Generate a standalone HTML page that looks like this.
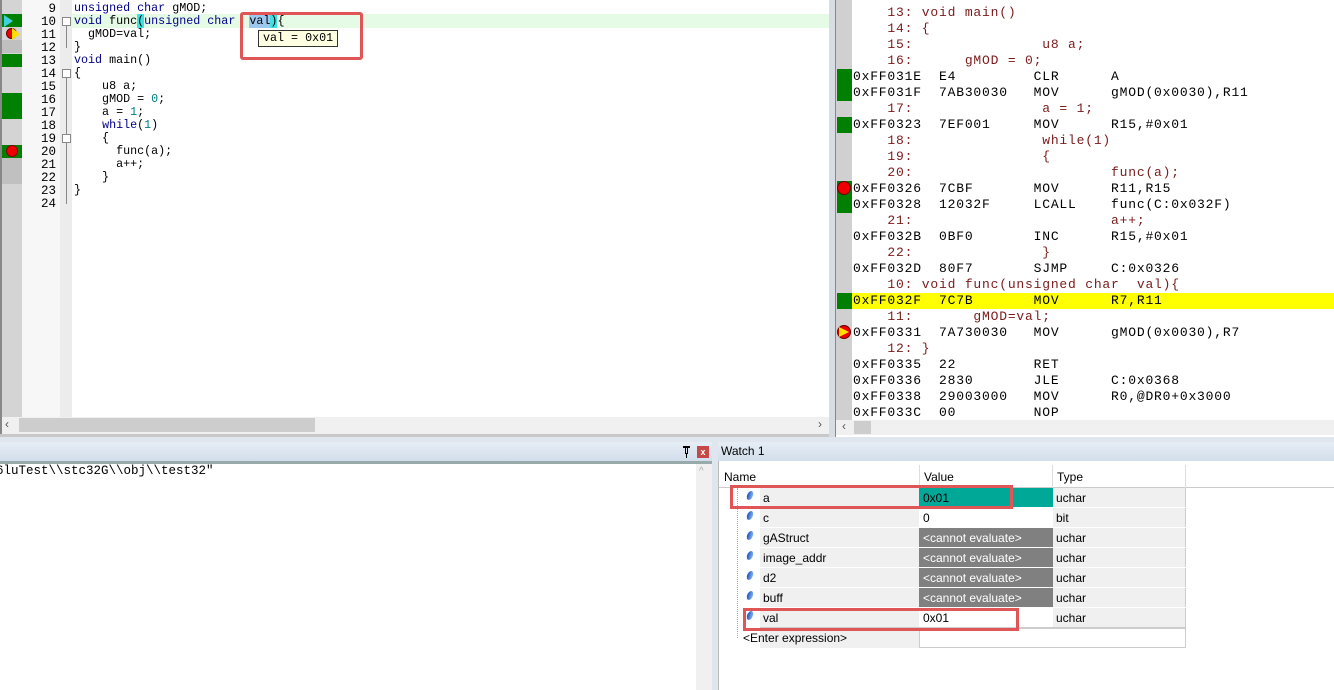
<!DOCTYPE html>
<html><head><meta charset="utf-8"><style>
*{margin:0;padding:0;box-sizing:border-box}
body{width:1334px;height:690px;overflow:hidden;background:#fff;position:relative;font-family:"Liberation Mono",monospace}
.a{position:absolute;white-space:pre}
.src{font-size:11.7px;line-height:13px;color:#000}
.kw{color:#00008b}
.num{color:#008080}
.ln{position:absolute;left:22px;width:34px;text-align:right;font-size:12.5px;color:#000}
.dis{font-size:13px;line-height:16px;letter-spacing:0.8px}
.s{color:#7a1a1a}
.w{font-family:"Liberation Sans",sans-serif;font-size:12px}
</style></head><body>
<div class="a" style="left:0;top:0;width:2px;height:437px;background:#888"></div>
<div class="a" style="left:2px;top:0;width:20px;height:417px;background:#d4d4d4"></div>
<div class="a" style="left:22px;top:0;width:38px;height:417px;background:#f7f7f7"></div>
<div class="a" style="left:60px;top:0;width:12px;height:417px;background:#ececec"></div>
<div class="a" style="left:72px;top:14px;width:757px;height:14px;background:#e6fbe6"></div>
<div class="a" style="left:2px;top:14px;width:20px;height:13px;background:#008000"></div>
<div class="a" style="left:4px;top:15px;width:0;height:0;border-left:9px solid #40d0e0;border-top:6px solid transparent;border-bottom:6px solid transparent"></div>
<div class="a" style="left:6px;top:28px;width:11px;height:11px;border-radius:50%;background:#e00;border:1px solid #600"></div>
<div class="a" style="left:12px;top:28px;width:0;height:0;border-left:8px solid #ffe000;border-top:6px solid transparent;border-bottom:6px solid transparent"></div>
<div class="a" style="left:2px;top:40px;width:20px;height:13px;background:#c0c0c0"></div>
<div class="a" style="left:2px;top:54px;width:20px;height:13px;background:#008000"></div>
<div class="a" style="left:2px;top:93px;width:20px;height:26px;background:#008000"></div>
<div class="a" style="left:2px;top:145px;width:20px;height:13px;background:#008000"></div>
<div class="a" style="left:6px;top:145px;width:12px;height:12px;border-radius:50%;background:#e00;border:1px solid #800"></div>
<div class="a" style="left:2px;top:158px;width:20px;height:26px;background:#c0c0c0"></div>
<div class="ln" style="top:2px">9</div><div class="ln" style="top:15px">10</div><div class="ln" style="top:28px">11</div><div class="ln" style="top:41px">12</div><div class="ln" style="top:54px">13</div><div class="ln" style="top:67px">14</div><div class="ln" style="top:80px">15</div><div class="ln" style="top:93px">16</div><div class="ln" style="top:106px">17</div><div class="ln" style="top:119px">18</div><div class="ln" style="top:132px">19</div><div class="ln" style="top:145px">20</div><div class="ln" style="top:158px">21</div><div class="ln" style="top:171px">22</div><div class="ln" style="top:184px">23</div><div class="ln" style="top:197px">24</div>
<div class="a" style="left:66px;top:21px;width:1px;height:27px;background:#888"></div>
<div class="a" style="left:66px;top:73px;width:1px;height:131px;background:#888"></div>
<div class="a" style="left:62px;top:17px;width:9px;height:9px;border:1px solid #888;background:#fff"></div>
<div class="a" style="left:62px;top:69px;width:9px;height:9px;border:1px solid #888;background:#fff"></div>
<div class="a" style="left:62px;top:134px;width:9px;height:9px;border:1px solid #888;background:#fff"></div>
<div class="a src" style="left:74px;top:2px"><span class="kw">unsigned char</span> gMOD;
<span class="kw">void</span> func<span style="background:#40e0e0">(</span><span class="kw">unsigned char</span>  <span style="background:#9cc8f0">val</span><span style="background:#40e0e0">)</span>{
  gMOD=val;
}
<span class="kw">void</span> main()
{
    u8 a;
    gMOD = <span class="num">0</span>;
    a = <span class="num">1</span>;
    <span class="kw">while</span>(<span class="num">1</span>)
    {
      func(a);
      a++;
    }
}</div>
<div class="a src" style="left:258px;top:30px;background:#ffffe1;border:1px solid #333;padding:0 4px;line-height:15px">val = 0x01</div>
<div class="a" style="left:240px;top:12px;width:123px;height:48px;border:3px solid #e05555;border-radius:3px"></div>
<div class="a" style="left:2px;top:417px;width:827px;height:17px;background:#f0f0f0"></div>
<div class="a" style="left:19px;top:418px;width:296px;height:14px;background:#cdcdcd"></div>
<div class="a w" style="left:5px;top:417px;color:#555">&lsaquo;</div><div class="a w" style="left:818px;top:417px;color:#555">&rsaquo;</div>
<div class="a" style="left:0;top:434px;width:832px;height:3px;background:#c8c8c8"></div>
<div class="a" style="left:829px;top:0;width:7px;height:437px;background:#d8dde4"></div>
<div class="a" style="left:835px;top:0;width:1px;height:437px;background:#888"></div>
<div class="a" style="left:836px;top:0;width:16px;height:420px;background:#d0d0d0"></div>
<div class="a" style="left:852px;top:293px;width:482px;height:16px;background:#ffff00"></div>
<div class="a" style="left:837px;top:69px;width:15px;height:32px;background:#008000"></div>
<div class="a" style="left:837px;top:117px;width:15px;height:16px;background:#008000"></div>
<div class="a" style="left:837px;top:181px;width:15px;height:32px;background:#008000"></div>
<div class="a" style="left:837px;top:181px;width:14px;height:14px;border-radius:50%;background:#e00;border:1px solid #600"></div>
<div class="a" style="left:837px;top:293px;width:15px;height:16px;background:#008000"></div>
<div class="a" style="left:837px;top:325px;width:14px;height:14px;border-radius:50%;background:#e00;border:1px solid #600"></div>
<div class="a" style="left:839px;top:327px;width:0;height:0;border-left:10px solid #ffe000;border-top:5px solid transparent;border-bottom:5px solid transparent"></div>
<div class="a dis" style="left:853px;top:-11px">0xFF031C  22         RET
<span class="s">    13: void main()
    14: {
    15:               u8 a;
    16:      gMOD = 0;</span>
0xFF031E  E4         CLR      A
0xFF031F  7AB30030   MOV      gMOD(0x0030),R11
<span class="s">    17:               a = 1;</span>
0xFF0323  7EF001     MOV      R15,#0x01
<span class="s">    18:               while(1)
    19:               {
    20:                       func(a);</span>
0xFF0326  7CBF       MOV      R11,R15
0xFF0328  12032F     LCALL    func(C:0x032F)
<span class="s">    21:                       a++;</span>
0xFF032B  0BF0       INC      R15,#0x01
<span class="s">    22:               }</span>
0xFF032D  80F7       SJMP     C:0x0326
<span class="s">    10: void func(unsigned char  val){</span>
0xFF032F  7C7B       MOV      R7,R11
<span class="s">    11:       gMOD=val;</span>
0xFF0331  7A730030   MOV      gMOD(0x0030),R7
<span class="s">    12: }</span>
0xFF0335  22         RET
0xFF0336  2830       JLE      C:0x0368
0xFF0338  29003000   MOV      R0,@DR0+0x3000
0xFF033C  00         NOP</div>
<div class="a" style="left:836px;top:420px;width:498px;height:15px;background:#f0f0f0"></div>
<div class="a" style="left:854px;top:421px;width:17px;height:13px;background:#cdcdcd"></div>
<div class="a w" style="left:842px;top:419px;color:#555">&lsaquo;</div>
<div class="a" style="left:0;top:437px;width:1334px;height:5px;background:#dfe6ee"></div>
<div class="a" style="left:0;top:442px;width:712px;height:19px;background:linear-gradient(#e6edf5,#d2deeb)"></div>
<div class="a" style="left:0;top:461px;width:712px;height:3px;background:#9aa"></div>
<div class="a" style="left:683px;top:446px;width:7px;height:2px;background:#000"></div>
<div class="a" style="left:685px;top:446px;width:3px;height:8px;border:1px solid #000;border-top:none"></div>
<div class="a" style="left:686px;top:454px;width:1px;height:4px;background:#000"></div>
<div class="a" style="left:697px;top:446px;width:12px;height:12px;background:#c84848;color:#fff;font:bold 9px 'Liberation Sans',sans-serif;text-align:center;line-height:12px">x</div>
<div class="a src" style="left:-4px;top:464px;font-size:12.5px;line-height:14px;padding-top:0">6luTest\\stc32G\\obj\\test32"</div>
<div class="a" style="left:696px;top:464px;width:16px;height:226px;background:#f0f0f0"></div>
<div class="a w" style="left:699px;top:466px;color:#aaa;font-size:10px">^</div>
<div class="a" style="left:712px;top:442px;width:6px;height:248px;background:#dfe6ee"></div>
<div class="a" style="left:718px;top:442px;width:616px;height:19px;background:linear-gradient(#e6edf5,#d2deeb)"></div>
<div class="a w" style="left:721px;top:444px">Watch 1</div>
<div class="a" style="left:718px;top:461px;width:616px;height:229px;background:#fff;border-left:1px solid #bbb"></div>
<div class="a" style="left:719px;top:487px;width:615px;height:1px;background:#ccc"></div>
<div class="a w" style="left:724px;top:470px">Name</div>
<div class="a w" style="left:924px;top:470px">Value</div>
<div class="a w" style="left:1057px;top:470px">Type</div>
<div class="a" style="left:919px;top:465px;width:1px;height:23px;background:#ddd"></div>
<div class="a" style="left:1052px;top:465px;width:1px;height:23px;background:#ddd"></div>
<div class="a" style="left:1185px;top:465px;width:1px;height:23px;background:#ddd"></div>
<div class="a" style="left:760px;top:488px;width:426px;height:160px;background:#f0f0f0"></div>
<div class="a" style="left:919px;top:488px;width:267px;height:160px;border-left:1px solid #ccc;border-right:1px solid #ccc"></div>
<div class="a" style="left:919px;top:488px;width:134px;height:20px;background:#00a898"></div>
<div class="a" style="left:919px;top:508px;width:134px;height:20px;background:#fff"></div>
<div class="a" style="left:919px;top:528px;width:134px;height:80px;background:#808080"></div>
<div class="a" style="left:919px;top:608px;width:134px;height:20px;background:#fff"></div>
<div class="a" style="left:919px;top:628px;width:267px;height:20px;background:#fff;border:1px solid #ccc"></div>
<div class="a" style="left:760px;top:507px;width:426px;height:1px;background:#fff"></div>
<div class="a" style="left:760px;top:527px;width:426px;height:1px;background:#fff"></div>
<div class="a" style="left:760px;top:547px;width:426px;height:1px;background:#fff"></div>
<div class="a" style="left:760px;top:567px;width:426px;height:1px;background:#fff"></div>
<div class="a" style="left:760px;top:587px;width:426px;height:1px;background:#fff"></div>
<div class="a" style="left:760px;top:607px;width:426px;height:1px;background:#fff"></div>
<div class="a" style="left:760px;top:627px;width:426px;height:1px;background:#ccc"></div>
<div class="a" style="left:737px;top:488px;width:1px;height:150px;border-left:1px dotted #aaa"></div>
<div class="a w" style="left:763px;top:491px">a</div><div class="a w" style="left:763px;top:511px">c</div><div class="a w" style="left:763px;top:531px">gAStruct</div><div class="a w" style="left:763px;top:551px">image_addr</div><div class="a w" style="left:763px;top:571px">d2</div><div class="a w" style="left:763px;top:591px">buff</div><div class="a w" style="left:763px;top:611px">val</div><div class="a w" style="left:743px;top:631px">&lt;Enter expression&gt;</div>
<div class="a w" style="left:923px;top:491px">0x01</div><div class="a w" style="left:923px;top:511px">0</div><div class="a w" style="left:923px;top:531px;color:#fff">&lt;cannot evaluate&gt;</div><div class="a w" style="left:923px;top:551px;color:#fff">&lt;cannot evaluate&gt;</div><div class="a w" style="left:923px;top:571px;color:#fff">&lt;cannot evaluate&gt;</div><div class="a w" style="left:923px;top:591px;color:#fff">&lt;cannot evaluate&gt;</div><div class="a w" style="left:923px;top:611px">0x01</div>
<div class="a w" style="left:1056px;top:491px">uchar</div><div class="a w" style="left:1056px;top:511px">bit</div><div class="a w" style="left:1056px;top:531px">uchar</div><div class="a w" style="left:1056px;top:551px">uchar</div><div class="a w" style="left:1056px;top:571px">uchar</div><div class="a w" style="left:1056px;top:591px">uchar</div><div class="a w" style="left:1056px;top:611px">uchar</div>
<div class="a" style="left:747px;top:491px;width:6px;height:9px;background:linear-gradient(90deg,#1a50c0,#8ab8f0);transform:skewX(-15deg);border-radius:50%"></div>
<div class="a" style="left:747px;top:511px;width:6px;height:9px;background:linear-gradient(90deg,#1a50c0,#8ab8f0);transform:skewX(-15deg);border-radius:50%"></div>
<div class="a" style="left:747px;top:531px;width:6px;height:9px;background:linear-gradient(90deg,#1a50c0,#8ab8f0);transform:skewX(-15deg);border-radius:50%"></div>
<div class="a" style="left:747px;top:551px;width:6px;height:9px;background:linear-gradient(90deg,#1a50c0,#8ab8f0);transform:skewX(-15deg);border-radius:50%"></div>
<div class="a" style="left:747px;top:571px;width:6px;height:9px;background:linear-gradient(90deg,#1a50c0,#8ab8f0);transform:skewX(-15deg);border-radius:50%"></div>
<div class="a" style="left:747px;top:591px;width:6px;height:9px;background:linear-gradient(90deg,#1a50c0,#8ab8f0);transform:skewX(-15deg);border-radius:50%"></div>
<div class="a" style="left:747px;top:611px;width:6px;height:9px;background:linear-gradient(90deg,#1a50c0,#8ab8f0);transform:skewX(-15deg);border-radius:50%"></div>
<div class="a" style="left:730px;top:485px;width:283px;height:24px;border:3px solid #e05555"></div>
<div class="a" style="left:743px;top:608px;width:276px;height:23px;border:3px solid #e05555"></div>
</body></html>
